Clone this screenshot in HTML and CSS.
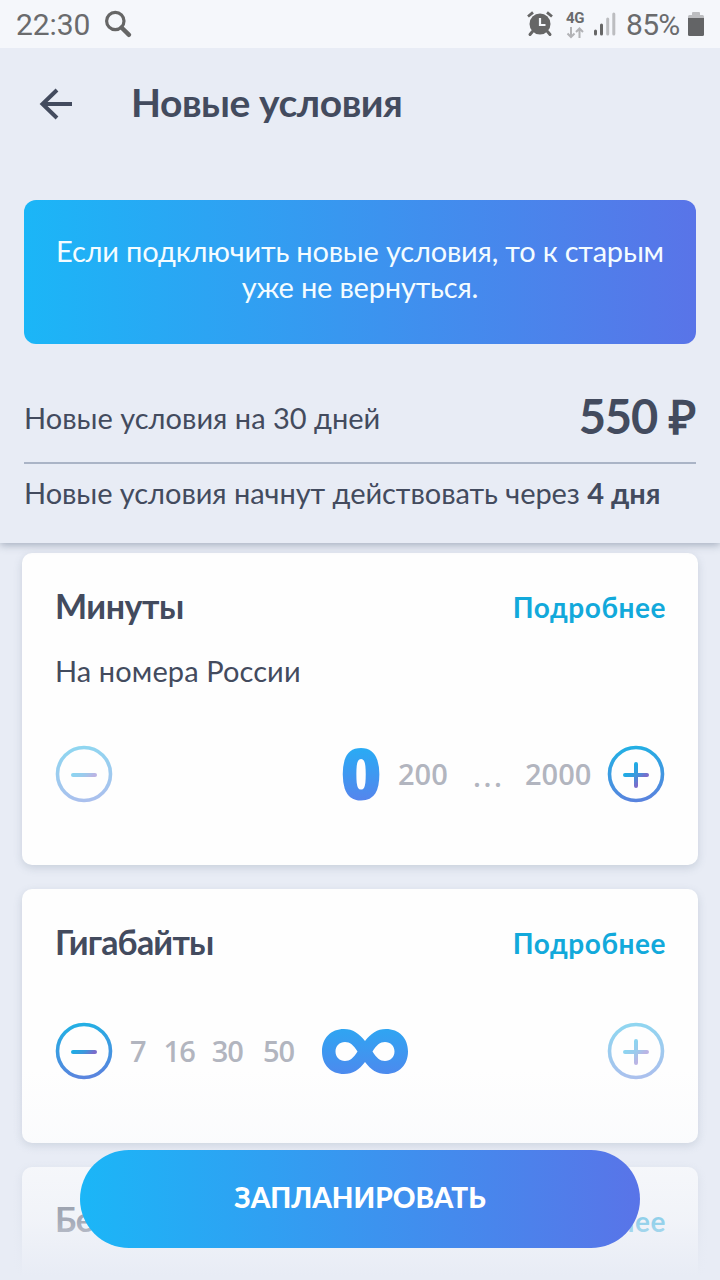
FILE: index.html
```html
<!DOCTYPE html>
<html lang="ru">
<head>
<meta charset="utf-8">
<title>Новые условия</title>
<link rel="stylesheet" href="styles.css">
</head>
<body>
<svg class="defs" width="0" height="0" aria-hidden="true">
  <defs>
    <linearGradient id="ring" gradientUnits="userSpaceOnUse" x1="26" y1="2" x2="34" y2="58"><stop offset="0" stop-color="#22b0e4"/><stop offset="1" stop-color="#5a82de"/></linearGradient>
    <linearGradient id="sign" gradientUnits="userSpaceOnUse" x1="20" y1="20" x2="41" y2="41"><stop offset="0.2" stop-color="#1bade5"/><stop offset="0.5" stop-color="#3d98dc"/><stop offset="0.75" stop-color="#7a6ccb"/></linearGradient>
    <linearGradient id="value" x1="0" y1="0" x2="0" y2="1"><stop offset="0" stop-color="#2fa5f2"/><stop offset="1" stop-color="#4c8aee"/></linearGradient>
  </defs>
</svg>
<div class="screen">
  <div class="status">
    <span class="clock">22:30</span>
    <svg class="search" width="30" height="30" viewBox="0 0 30 30"><circle cx="12.3" cy="12" r="8.7" fill="none" stroke="#666" stroke-width="3.2"/><path d="M18.5 18.5 26 25.8" stroke="#666" stroke-width="4.4" stroke-linecap="round"/></svg>
    <svg class="alarm" width="28" height="28" viewBox="0 0 28 28"><circle cx="14" cy="14" r="10.5" fill="#666"/><path d="M6.5 21.500 4 24.500M21.500 21.500 24 24.500" stroke="#666" stroke-width="3" stroke-linecap="round"/><path d="M2 6.500 7 2.400M26 6.500 21 2.400" stroke="#666" stroke-width="2.800"/><path d="M14 8V15H19.500" fill="none" stroke="#f5f7fb" stroke-width="2.200"/></svg>
    <div class="network"><span class="net-label">4G</span><svg width="18" height="12" viewBox="0 0 18 12"><path d="M5 0V10M1.500 6.500 5 10 8.500 6.500M13.500 11V1.500M10 5 13.500 1.500 17 5" fill="none" stroke="#b2b3b6" stroke-width="2"/></svg></div>
    <svg class="signal" width="24" height="26" viewBox="0 0 24 26"><path d="M2.500 20V23M8.500 14V23" stroke="#666" stroke-width="3" stroke-linecap="round"/><path d="M14.700 8V23M20.800 3V23" stroke="#bcbdc0" stroke-width="3" stroke-linecap="round"/></svg>
    <span class="charge">85%</span>
    <svg class="battery" width="16" height="24" viewBox="0 0 16 24"><path d="M4 4V1Q4 0 5 0H11Q12 0 12 1V4Z" fill="#bcbdc0"/><path d="M0 4.500Q0 3 1.500 3H14.500Q16 3 16 4.500V6H0Z" fill="#bcbdc0"/><path d="M0 6H16V22.500Q16 24 14.500 24H1.500Q0 24 0 22.500Z" fill="#636466"/></svg>
  </div>
  <section class="summary">
    <header class="topbar">
      <svg width="34" height="32" viewBox="0 0 34 32"><path d="M18 2 3.500 16 18 30M4 16H33" fill="none" stroke="#434b5e" stroke-width="4"/></svg>
      <h1 class="title">Новые условия</h1>
    </header>
    <p class="notice">Если подключить новые условия, то к старым<br>уже не вернуться.</p>
    <div class="price-row"><span class="body price-label">Новые условия на 30 дней</span><span class="price">550 ₽</span></div>
    <p class="body start">Новые условия начнут действовать через <b>4 дня</b></p>
  </section>
  <main class="cards">
    <article class="card minutes">
      <div class="card-head"><h2 class="name">Минуты</h2><a class="more">Подробнее</a></div>
      <p class="body sub">На номера России</p>
      <div class="picker">
        <svg class="off" width="60" height="60" viewBox="0 0 60 60"><circle cx="30" cy="30" r="26.500" fill="none" stroke="url(#ring)" stroke-width="3.600"/><rect x="17" y="29" width="26" height="4" rx="2" fill="url(#sign)"/></svg>
        <span class="zero">0</span><span class="option o200">200</span><span class="option dots">...</span><span class="option o2000">2000</span>
        <svg class="plus" width="60" height="60" viewBox="0 0 60 60"><circle cx="30" cy="30" r="26.500" fill="none" stroke="url(#ring)" stroke-width="3.600"/><path d="M19 29H28V20Q28 18 30 18T32 20V29H41Q43 29 43 31T41 33H32V42Q32 44 30 44T28 42V33H19Q17 33 17 31T19 29Z" fill="url(#sign)"/></svg>
      </div>
    </article>
    <article class="card gigabytes">
      <div class="card-head"><h2 class="name giga-name">Гигабайты</h2><a class="more">Подробнее</a></div>
      <div class="picker">
        <svg width="60" height="60" viewBox="0 0 60 60"><circle cx="30" cy="30" r="26.500" fill="none" stroke="url(#ring)" stroke-width="3.600"/><rect x="17" y="29" width="26" height="4" rx="2" fill="url(#sign)"/></svg>
        <div class="volumes"><span class="option">7</span><span class="option">16</span><span class="option">30</span><span class="option">50</span></div>
        <svg class="infinity" width="86" height="45" viewBox="0 0 86 45"><path fill="url(#value)" fill-rule="evenodd" d="M22 0C31 0 37 4.500 43 12C49 4.500 55 0 64 0C77 0 86 9 86 22.500S77 45 64 45C55 45 49 41 43 33C37 41 31 45 22 45C9 45 0 36 0 22.500S9 0 22 0ZM23 13C17.500 13 13.500 17 13.500 22.500S17.500 32 23 32C28 32 31.500 29 35.500 22.500C31.500 16 28 13 23 13ZM63 13C58 13 54.500 16 50.500 22.500C54.500 29 58 32 63 32C68.500 32 72.500 28 72.500 22.500S68.500 13 63 13Z"/></svg>
        <svg class="plus off" width="60" height="60" viewBox="0 0 60 60"><circle cx="30" cy="30" r="26.500" fill="none" stroke="url(#ring)" stroke-width="3.600"/><path d="M19 29H28V20Q28 18 30 18T32 20V29H41Q43 29 43 31T41 33H32V42Q32 44 30 44T28 42V33H19Q17 33 17 31T19 29Z" fill="url(#sign)"/></svg>
      </div>
    </article>
    <article class="card next"><div class="card-head"><h2 class="name">Бе</h2><a class="more">Подробнее</a></div></article>
  </main>
  <div class="action"><button class="plan">ЗАПЛАНИРОВАТЬ</button></div>
</div>
</body>
</html>
```
FILE: styles.css
```css
* { box-sizing: border-box; }
body { margin: 0; font-family: Lato, "Open Sans", sans-serif; color: #434b5e; }
h1, h2, p { margin: 0; }
.defs { position: absolute; }
.screen { position: relative; width: 720px; height: 1280px; overflow: hidden; background: #e8ecf5; display: flex; flex-direction: column; }
.status { position: relative; z-index: 2; height: 48px; flex: none; display: flex; align-items: center; background: #f5f7fb; padding: 0 16px; font-family: Roboto, sans-serif; font-size: 30px; color: #6a6b6d; font-weight: 400; }
.clock { width: 75px; letter-spacing: -0.1px; }
.search { margin-left: 12px; }
.alarm { margin-left: auto; }
.network { display: flex; flex-direction: column; align-items: center; width: 20px; margin-left: 11px; gap: 1px; padding-top: 2px; }
.net-label { font-size: 15px; line-height: 15px; font-weight: 700; letter-spacing: -0.3px; }
.signal { margin-left: 8px; }
.charge { width: 57px; margin-left: 9px; letter-spacing: -0.7px; }
.battery { margin-left: 5px; }
.summary { position: relative; z-index: 1; height: 495px; flex: none; padding: 0 24px; background: #e8ecf5; box-shadow: 0 2px 8px rgba(80, 95, 120, 0.45); }
.topbar { height: 112px; display: flex; align-items: center; padding-left: 15px; gap: 58px; margin-bottom: 40px; }
.title { font-size: 39px; font-weight: 700; line-height: 48px; letter-spacing: -0.45px; white-space: nowrap; padding-bottom: 5px; }
.notice { height: 144px; padding-top: 33px; border-radius: 12px; background: linear-gradient(90deg, #1bb6f7, #5974e8); color: #f4fcff; text-align: center; font-size: 29px; line-height: 36px; letter-spacing: -0.2px; white-space: nowrap; }
.body { font-size: 29px; line-height: 40px; white-space: nowrap; }
.price-row { height: 120px; padding-top: 27px; display: flex; justify-content: space-between; align-items: center; border-bottom: 2px solid #aab4c6; }
.price { font-size: 47px; font-weight: 700; line-height: 60px; letter-spacing: -1.2px; word-spacing: 2px; margin-right: 1px; padding-bottom: 1px; white-space: nowrap; }
.price-label { padding-top: 3px; }
.start { padding-top: 9px; letter-spacing: -0.06px; }
.cards { padding: 10px 22px; display: flex; flex-direction: column; gap: 24px; }
.card { flex: none; background: #fefefe; border-radius: 10px; padding: 27px 32px 0 33px; box-shadow: 0 3px 9px rgba(90, 110, 130, 0.22); }
.card-head { display: flex; justify-content: space-between; align-items: center; height: 52px; }
.name { font-size: 34px; font-weight: 700; line-height: 44px; letter-spacing: -0.5px; }
.giga-name { letter-spacing: -0.8px; }
.more { font-size: 28px; font-weight: 700; letter-spacing: 0.55px; color: #12a9db; padding-top: 1px; }
.minutes { height: 312px; }
.gigabytes { height: 254px; }
.next { height: 140px; }
.next .card-head { height: 50px; }
.next .more { padding-top: 4px; }
.sub { padding-top: 19px; letter-spacing: 0.1px; }
.picker { display: flex; align-items: center; height: 60px; margin-left: -1px; }
.minutes .picker { margin-top: 53px; }
.gigabytes .picker { margin-top: 53px; }
.picker svg { flex: none; }
.off { opacity: 0.5; }
.plus { margin-left: auto; }
.option { font-family: "Open Sans", sans-serif; font-size: 29px; font-weight: 600; color: #b2b5bf; line-height: 40px; }
.zero { width: 44px; margin-left: 225px; font-family: "Open Sans", sans-serif; font-size: 71px; line-height: 80px; padding-bottom: 3px; font-weight: 800; text-align: center; background: linear-gradient(#2aaaf4 20%, #5486ed 80%); background-clip: text; color: transparent; }
.o200 { margin-left: 15px; width: 50px; }
.dots { margin-left: 25px; width: 30px; letter-spacing: 2.5px; padding-top: 4px; }
.o2000 { margin-left: 22px; width: 68px; }
.volumes { display: flex; gap: 17px; width: 192px; margin-left: 16px; letter-spacing: -1px; }
.volumes .option:nth-child(2) { margin-left: 1px; }
.volumes .option:nth-child(4) { margin-left: 3px; }
.action { position: absolute; z-index: 2; left: 0; right: 0; bottom: 0; height: 210px; padding: 80px 80px 0; background: linear-gradient(rgba(232, 236, 245, 0), rgba(232, 236, 245, 0.15) 33%, rgba(232, 236, 245, 0.42) 48%, rgba(232, 236, 245, 0.6) 72%, #e8ecf5 98%); }
.plan { display: block; width: 560px; height: 98px; border: 0; border-radius: 49px; padding: 0 0 5px; background: linear-gradient(90deg, #1bb6f7, #5974e8); color: #fff; font: 900 28px Lato, "Open Sans", sans-serif; }
```
